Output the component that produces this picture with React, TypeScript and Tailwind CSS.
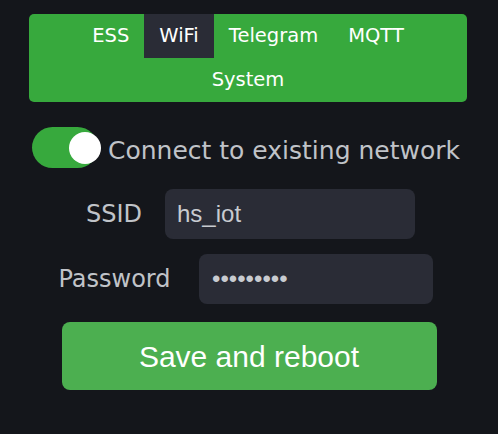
import {useState} from 'react';

const tabs = ['ESS', 'WiFi', 'Telegram', 'MQTT', 'System'];

export default function App() {
    const [active, setActive] = useState('WiFi');
    const [connect, setConnect] = useState(true);
    const [ssid, setSsid] = useState('hs_iot');
    const [password, setPassword] = useState('secret123');

    return (
        <div className="min-h-[434px] bg-[#14161b] pt-[14px] font-['DejaVu_Sans',sans-serif]">
            <nav className="w-[438px] ml-[29px] px-[30px] bg-[#37a93d] rounded-[5px] flex flex-wrap justify-center">
                {tabs.map((tab) => (
                    <button
                        key={tab}
                        onClick={() => setActive(tab)}
                        className={`px-[15px] py-[10px] text-[19.5px] leading-[24px] text-white ${active === tab ? 'bg-[#2a2c36]' : ''}`}
                    >
                        {tab}
                    </button>
                ))}
            </nav>

            <div className="mt-[25px] flex justify-center items-center pr-[6px]">
                <button
                    onClick={() => setConnect(!connect)}
                    className={`relative w-[66px] h-[41px] rounded-full shrink-0 ${connect ? 'bg-[#37a93d]' : 'bg-[#555]'}`}
                >
                    <span className={`absolute top-[5px] w-[32px] h-[32px] rounded-full bg-white ${connect ? 'left-[37px]' : 'left-[4px]'}`}/>
                </button>
                <span className="ml-[10px] pt-[6px] text-[25px] leading-[30px] text-[#c0c3c8]">Connect to existing network</span>
            </div>

            <div className="mt-[21px] flex justify-center items-center gap-[20px]">
                <label className="w-[62px] text-center text-[24px] leading-[28px] text-[#c0c3c8]">SSID</label>
                <input
                    value={ssid}
                    onChange={(e) => setSsid(e.target.value)}
                    className="w-[250px] h-[50px] rounded-[8px] bg-[#2a2c36] pl-[12px] text-[24px] text-[#c8cbd0] font-['Liberation_Sans',sans-serif] outline-none"
                />
            </div>

            <div className="mt-[15px] flex justify-center items-center gap-[27px] pr-[8px]">
                <label className="w-[115px] text-center text-[24px] leading-[28px] text-[#c0c3c8]">Password</label>
                <input
                    type="password"
                    value={password}
                    onChange={(e) => setPassword(e.target.value)}
                    className="w-[234px] h-[50px] rounded-[8px] bg-[#2a2c36] pl-[13px] text-[24px] text-[#c8cbd0] font-['Liberation_Sans',sans-serif] outline-none"
                />
            </div>

            <div className="mt-[18px] flex justify-center">
                <button className="w-[375px] h-[68px] rounded-[8px] bg-[#4caf50] text-white text-[30px] font-['Liberation_Sans',sans-serif]">
                    Save and reboot
                </button>
            </div>
        </div>
    );
}
